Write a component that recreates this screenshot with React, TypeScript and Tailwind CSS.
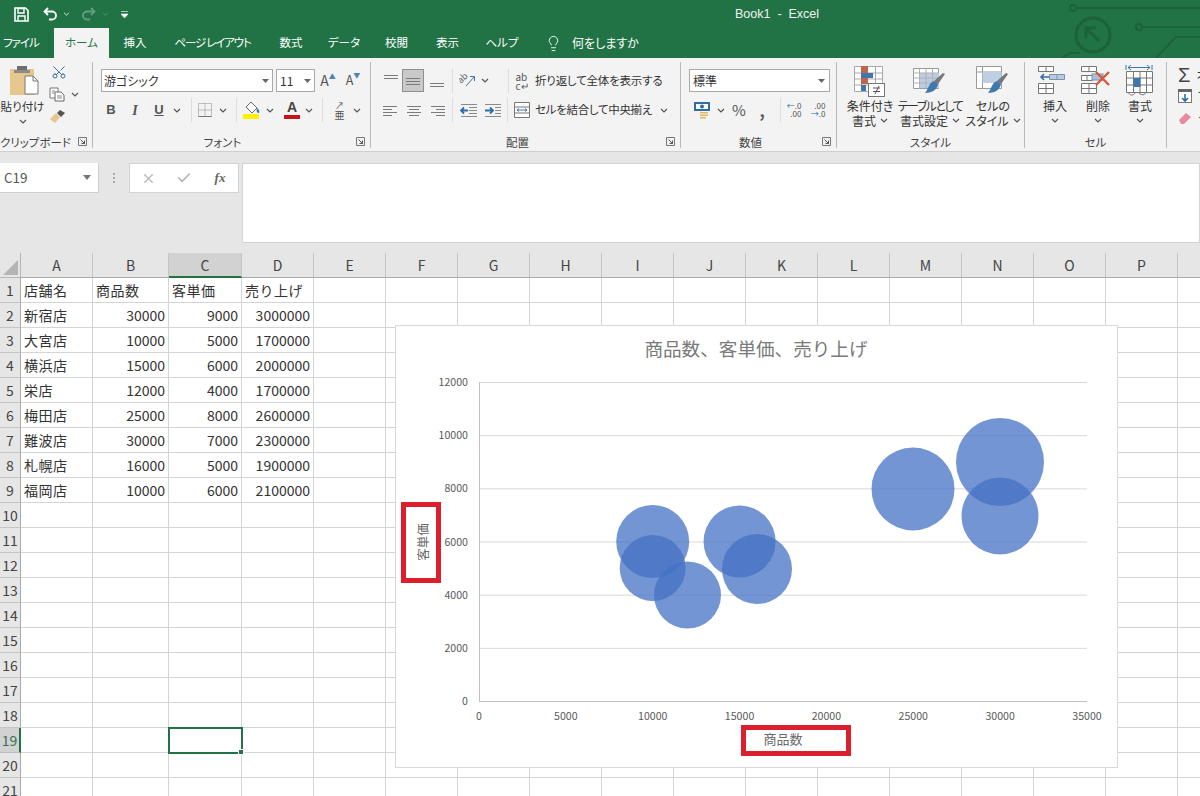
import { Scissors, Lightbulb, X, Check } from "lucide-react";
import type { ReactNode } from "react";

const COLS = ["A", "B", "C", "D", "E", "F", "G", "H", "I", "J", "K", "L", "M", "N", "O", "P", "Q", "R"];

const DATA: [string, number, number, number][] = [
  ["新宿店", 30000, 9000, 3000000],
  ["大宮店", 10000, 5000, 1700000],
  ["横浜店", 15000, 6000, 2000000],
  ["栄店", 12000, 4000, 1700000],
  ["梅田店", 25000, 8000, 2600000],
  ["難波店", 30000, 7000, 2300000],
  ["札幌店", 16000, 5000, 1900000],
  ["福岡店", 10000, 6000, 2100000],
];

const BUBBLES = [
  [1000, 462, 44],
  [652.7, 541.5, 36.5],
  [652.7, 568, 33],
  [739.6, 541.5, 36],
  [757, 569, 35],
  [687.5, 595, 33.5],
  [913, 489, 41.5],
  [1000, 516, 38.5],
];

function Chevron({ className = "" }: { className?: string }) {
  return (
    <svg width="8" height="5" viewBox="0 0 8 5" className={className}>
      <path d="M1 1l3 3 3-3" fill="none" stroke="#555" strokeWidth="1.2" />
    </svg>
  );
}

function Slot({ w, children, className = "" }: { w: number; children?: ReactNode; className?: string }) {
  return (
    <div className={`flex shrink-0 items-center justify-center ${className}`} style={{ width: w }}>
      {children}
    </div>
  );
}

function Sep({ className = "" }: { className?: string }) {
  return <div className={`h-[24px] w-px shrink-0 bg-[#dcdcdc] ${className}`} />;
}

function Launcher() {
  return (
    <svg width="9" height="9" viewBox="0 0 9 9" className="absolute right-[5px] bottom-[2px]">
      <path d="M.5 8.5v-8h8v8z" fill="none" stroke="#777" />
      <path d="M2.5 2.5l4 4M6.5 3.5v3h-3" fill="none" stroke="#555" />
    </svg>
  );
}

function Group({ w, label, pr = 0, launcher = true, children }: { w: number; label: string; pr?: number; launcher?: boolean; children: ReactNode }) {
  return (
    <div className="relative flex h-full shrink-0 flex-col border-r border-[#b9b9b9]" style={{ width: w }}>
      <div className="h-[73px] shrink-0">{children}</div>
      <div className="flex-1 text-center text-[11.5px] leading-[14px] whitespace-nowrap text-[#444]" style={{ paddingRight: pr }}>
        {label}
      </div>
      {launcher && <Launcher />}
    </div>
  );
}

// three short lines used by the alignment buttons
function Lines({ kind }: { kind: "l" | "c" | "r" | "t" | "m" | "b" }) {
  const ys = kind === "t" ? [2, 5] : kind === "m" ? [5, 8, 11] : kind === "b" ? [10, 13] : [3, 6, 9, 12];
  return (
    <svg width="16" height="15" viewBox="0 0 16 15">
      {ys.map((y, i) => {
        const short = i % 2 === 1;
        let x1 = 1;
        let x2 = 15;
        if (short && kind === "l") x2 = 10;
        if (short && kind === "r") x1 = 6;
        if (short && kind === "c") {
          x1 = 3;
          x2 = 13;
        }
        return <line key={y} x1={x1} x2={x2} y1={y + 0.5} y2={y + 0.5} stroke="#7b7b7b" />;
      })}
    </svg>
  );
}

function Indent({ flip }: { flip?: boolean }) {
  return (
    <svg width="18" height="14" viewBox="0 0 18 14">
      {[1, 4, 7, 10, 13].map((y) => (
        <line key={y} x1={y > 3 && y < 11 ? (flip ? 11 : 9) : 1} x2="17" y1={y + 0.5} y2={y + 0.5} stroke="#8a8a8a" />
      ))}
      <path d={flip ? "M1 7.5h8M6 4.5l3 3-3 3" : "M8 7.5H1M4 4.5l-3 3 3 3"} fill="none" stroke="#2f6ea5" strokeWidth="1.8" />
    </svg>
  );
}

function PasteIcon() {
  return (
    <svg width="30" height="30" viewBox="0 0 30 30">
      <rect x="0" y="4" width="24" height="26" fill="#e8c78f" />
      <rect x="7" y="1" width="10" height="6" fill="#6f6f6f" />
      <rect x="4" y="5" width="16" height="3" fill="#8b8b8b" />
      <path d="M15 11h8l5 5v13H15z" fill="#fff" stroke="#777" />
      <path d="M23 11v5h5" fill="none" stroke="#777" />
    </svg>
  );
}

function CopyIcon() {
  return (
    <svg width="16" height="15" viewBox="0 0 16 15">
      <path d="M1 1h8v10H1z" fill="#fff" stroke="#777" />
      <path d="M6 5h6l3 3v6H6z" fill="#fff" stroke="#666" />
      <path d="M8 9h5M8 11h5M3 4h3M3 6h2" stroke="#888" />
    </svg>
  );
}

function BrushIcon() {
  return (
    <svg width="17" height="15" viewBox="0 0 17 15">
      <path d="M1 10l6-6 4 4-5 6z" fill="#e7c58c" />
      <path d="M8 4l3-3 5 3-4 4z" fill="#555" />
    </svg>
  );
}

function CondIcon() {
  return (
    <svg width="32" height="32" viewBox="0 0 32 32">
      <path d="M.5 1.5h28v25H.5zM.5 8h28M.5 14h28M.5 20h28M7.5 1.5v25M21.5 1.5v25" fill="#fff" stroke="#a8a8a8" />
      <rect x="7" y="1" width="7" height="7" fill="#c0654a" />
      <rect x="7" y="8" width="12" height="5" fill="#3f76ad" />
      <rect x="7" y="13" width="7" height="6" fill="#c0654a" />
      <rect x="7" y="20" width="5" height="6" fill="#3f76ad" />
      <rect x="14.5" y="18.5" width="16" height="13" fill="#fff" stroke="#777" />
      <path d="M19 23h7M19 26.5h7M25 21l-4 8" stroke="#555" fill="none" />
    </svg>
  );
}

function SheetBrush({ table }: { table?: boolean }) {
  return (
    <svg width="34" height="32" viewBox="0 0 34 32">
      {table ? (
        <>
          <path d="M.5 3.5h25v20H.5z" fill="#fff" stroke="#9a9a9a" />
          <rect x="6" y="8" width="20" height="15" fill="#bccde2" />
          <path d="M6.5 3.5v20M13 3.5v20M19.5 3.5v20M.5 8h25M.5 13h25M.5 18h25" stroke="#b0b0b0" fill="none" />
        </>
      ) : (
        <>
          <path d="M.5 1.5h25v22H.5zM.5 7h25M6.5 1.5v22" fill="#fff" stroke="#9a9a9a" />
          <rect x="6.5" y="7" width="19" height="11" fill="#bccfe4" />
        </>
      )}
      <path d="M32 9l-7 10-4-3 9-8z" fill="#777" />
      <path d="M21 16l4 3c-1 5-5 9-13 9 2-2 2-4 4-7 1-3 3-4 5-5z" fill="#3f78ad" />
    </svg>
  );
}

function InsertIcon({ del }: { del?: boolean }) {
  return (
    <svg width="34" height="32" viewBox="0 0 34 32">
      <path d="M.5 1.5h15v5H.5zM8 1.5v5M.5 18.5h15v10H.5zM.5 23.5h15M8 18.5v10" fill="#fff" stroke="#777" />
      {del ? (
        <>
          <path d="M.5 10.5h11v5H.5zM6 10.5v5" fill="#fff" stroke="#777" />
          <rect x="11" y="9" width="11" height="6" fill="#a9c0d8" stroke="#7a93ad" />
          <path d="M15 7l13 13M28 7L15 20" stroke="#d4583b" strokeWidth="2.4" />
        </>
      ) : (
        <>
          <path d="M3 12h8M6 9l-3 3 3 3" fill="none" stroke="#2f6ea5" strokeWidth="1.6" />
          <path d="M11.5 9.5h15v5h-15zM19 9.5v5" fill="#b9cbdf" stroke="#7a93ad" />
        </>
      )}
    </svg>
  );
}

function FormatIcon() {
  return (
    <svg width="30" height="32" viewBox="0 0 30 32">
      <path d="M1 0v5M27 0v5M3 2.5h22M6 0L3 2.5 6 5M22 0l3 2.5L22 5" fill="none" stroke="#3f78ad" />
      <path d="M1.5 6.5h26v21h-26zM8.5 6.5v21M15 6.5v21M21.5 6.5v21M1.500 13h26M1.500 20h26" fill="#fff" stroke="#777" />
      <rect x="8.500" y="13" width="7" height="9" fill="#3f76ad" />
      <path d="M3 27c2 4 5 4 7 1M14 28c3 3 6 2 7-1" fill="none" stroke="#777" />
    </svg>
  );
}

function Large({ w, icon, l1, l2, ml = 0, tight = "" }: { w: number; icon: ReactNode; l1: string; l2: ReactNode; ml?: number; tight?: string }) {
  return (
    <div className="flex shrink-0 flex-col items-center" style={{ width: w, marginLeft: ml }}>
      <div className="flex h-[36px] items-start pt-[3px]">{icon}</div>
      <div className={`whitespace-nowrap text-[12px] leading-[15px] text-[#333] ${tight}`}>{l1}</div>
      <div className="flex h-[15px] items-center gap-[4px] whitespace-nowrap text-[12px] leading-[15px] text-[#333]">{l2}</div>
    </div>
  );
}

function Chart() {
  const yTicks = [0, 2000, 4000, 6000, 8000, 10000, 12000];
  const xTicks = [0, 5000, 10000, 15000, 20000, 25000, 30000, 35000];
  const yPos = (v: number) => 701 - (v / 12000) * 319;
  const xPos = (v: number) => 479 + (v / 35000) * 608;
  return (
    <div className="absolute top-[72px] left-[395px] h-[443px] w-[723px] border border-[#d9d9d9] bg-white">
      <svg width="721" height="441" viewBox="396 326 721 441" className="block">
        <text x="756" y="356" textAnchor="middle" fontSize="18.6" fill="#7a7a7a">商品数、客単価、売り上げ</text>
        {yTicks.map((v) => (
          <g key={v}>
            <line x1="479" x2="1087" y1={yPos(v) + 0.5} y2={yPos(v) + 0.5} stroke={v === 0 ? "#bfbfbf" : "#d9d9d9"} />
            <text x="468" y={yPos(v) + 4} textAnchor="end" fontSize="10.6" fill="#595959">{v}</text>
          </g>
        ))}
        <line x1="479.500" x2="479.500" y1="382" y2="701" stroke="#bfbfbf" />
        {xTicks.map((v) => (
          <text key={v} x={xPos(v)} y="720" textAnchor="middle" fontSize="10.6" fill="#595959">{v}</text>
        ))}
        {BUBBLES.map(([cx, cy, r]) => (
          <circle key={`${cx}-${cy}`} cx={cx} cy={cy} r={r} fill="#4472c4" fillOpacity="0.75" />
        ))}
        <text x="783" y="744" textAnchor="middle" fontSize="13" fill="#6a6a6a">商品数</text>
        <text transform="translate(428 542) rotate(-90)" textAnchor="middle" fontSize="12.500" fill="#6a6a6a">客単価</text>
        <rect x="403.500" y="504.500" width="35" height="76" fill="none" stroke="#dc1f2c" strokeWidth="5" />
        <rect x="743.500" y="727.500" width="105" height="26" fill="none" stroke="#dc1f2c" strokeWidth="5" />
      </svg>
    </div>
  );
}

function Sheet() {
  const rows = Array.from({ length: 21 }, (_, i) => i + 1);
  const cell = "h-[25px] border-r border-b border-[#d4d4d4] px-[3px] text-[14px] leading-[24px] text-[#333] whitespace-nowrap overflow-hidden";
  return (
    <div className="relative grid grid-cols-[21px_72px_76px_73px_72px_repeat(14,72px)]">
      <div className="flex h-[25px] items-end justify-end border-r border-b border-[#b5b5b5] bg-[#e6e6e6] p-[2px]">
        <div className="h-0 w-0 border-t-[15px] border-t-transparent [border-left-width:0] [border-right:15px_solid_#b4b4b4]" />
      </div>
      {COLS.map((c) => (
        <div
          key={c}
          className={`h-[25px] border-r border-[#c4c4c4] text-center text-[14px] leading-[24px] ${
            c === "C" ? "border-b-2 border-b-[#217346] bg-[#d2d2d2] text-[#444]" : "border-b border-b-[#a9a9a9] bg-[#e6e6e6] text-[#444]"
          }`}
        >
          {c}
        </div>
      ))}
      {rows.map((r) => (
        <div key={r} className="contents">
          <div
            className={`h-[25px] border-b text-center text-[14px] leading-[24px] ${
              r === 19
                ? "border-r-2 border-r-[#217346] border-b-[#bdbdbd] bg-[#d2d2d2] text-[#3c6e55]"
                : "border-r border-r-[#a9a9a9] border-b-[#c4c4c4] bg-[#e6e6e6] text-[#444]"
            }`}
          >
            {r}
          </div>
          {COLS.map((c, ci) => {
            let content: ReactNode = null;
            let right = false;
            if (r === 1 && ci < 4) {
              content = ["店舗名", "商品数", "客単価", "売り上げ"][ci];
            } else if (r >= 2 && r <= 9 && ci < 4) {
              content = DATA[r - 2][ci];
              right = ci > 0;
            }
            const selected = r === 19 && c === "C";
            return (
              <div
                key={c}
                className={`${cell} ${right ? "text-right" : "tracking-[0.5px]"} ${
                  selected ? "relative z-10 overflow-visible outline-2 -outline-offset-1 outline-[#217346]" : ""
                }`}
              >
                {content}
                {selected && <div className="absolute -right-[3px] -bottom-[3px] h-[6px] w-[6px] border border-white bg-[#217346]" />}
              </div>
            );
          })}
        </div>
      ))}
      <Chart />
    </div>
  );
}

export default function App() {
  const tabs: [string, number, string][] = [
    ["挿入", 52, ""],
    ["ページ レイアウト", 103, "tracking-[-1.2px]"],
    ["数式", 54, ""],
    ["データ", 52, ""],
    ["校閲", 53, ""],
    ["表示", 49, ""],
    ["ヘルプ", 60, ""],
  ];
  return (
    <div className="flex h-[796px] w-[1200px] flex-col overflow-hidden bg-white font-['Noto_Sans_CJK_JP','Noto_Sans',sans-serif]">
      <div className="relative h-[58px] shrink-0 overflow-hidden bg-[#217346] text-white [font-feature-settings:'palt']">
        {/* circuit pattern on the right of the title bar */}
        <svg width="150" height="58" viewBox="1050 0 150 58" className="absolute top-0 right-0">
          <g fill="none" stroke="#1b6239" strokeWidth="2">
            <circle cx="1073" cy="8" r="3" />
            <path d="M1076 8h124" />
            <circle cx="1093" cy="35" r="17" strokeWidth="3" />
            <path d="M1087 29l12 12M1086 38v-10h10" strokeWidth="3" />
            <circle cx="1139" cy="27" r="3" />
            <path d="M1142 27h58M1200 37h-24l-20 21M1062 58l8-5h10" />
          </g>
        </svg>

        <div className="relative flex h-[28px] items-center">
          <Slot w={42}>
            <svg width="15" height="15" viewBox="0 0 15 15">
              <path d="M1 1h10.500L14 3.500V14H1z" fill="none" stroke="#fff" strokeWidth="1.600" />
              <path d="M4 1.500h6V6H4zM4 14V9h7v5" fill="none" stroke="#fff" strokeWidth="1.400" />
            </svg>
          </Slot>
          <Slot w={16}>
            <svg width="15" height="14" viewBox="0 0 15 14">
              <path d="M5 1L1.500 4.500 5 8M2 4.500h7a4 4 0 0 1 0 8H6" fill="none" stroke="#fff" strokeWidth="1.800" />
            </svg>
          </Slot>
          <Slot w={16}>
            <svg width="7" height="4" viewBox="0 0 8 5"><path d="M1 1l3 3 3-3" fill="none" stroke="#fff" /></svg>
          </Slot>
          <Slot w={22} className="ml-[3px] opacity-30">
            <svg width="15" height="14" viewBox="0 0 15 14">
              <path d="M10 1l3.500 3.500L10 8M13 4.500H6a4 4 0 0 0 0 8h3" fill="none" stroke="#fff" strokeWidth="1.800" />
            </svg>
          </Slot>
          <Slot w={12} className="opacity-30">
            <svg width="7" height="4" viewBox="0 0 8 5"><path d="M1 1l3 3 3-3" fill="none" stroke="#fff" /></svg>
          </Slot>
          <Slot w={17} className="ml-[5px]">
            <svg width="7" height="7" viewBox="0 0 7 7"><path d="M0 .5h7M0 3h7L3.500 7z" fill="#fff" stroke="#fff" strokeWidth=".6" /></svg>
          </Slot>
          <span className="ml-[602px] whitespace-pre font-['Liberation_Sans',sans-serif] text-[12.500px] text-[#f2f2f2]">Book1  -  Excel</span>
        </div>

        <div className="relative flex h-[30px] items-stretch text-[11.500px] leading-[29px]">
          <div className="w-[54px] pl-[3px] tracking-[-1px]">ファイル</div>
          <div className="w-[55px] bg-[#f3f3f3] text-center text-[#217346]">ホーム</div>
          {tabs.map(([t, w, extra]) => (
            <div key={t} className={`text-center whitespace-pre ${extra}`} style={{ width: w }}>
              {t}
            </div>
          ))}
          <Slot w={40}>
            <Lightbulb size={17} strokeWidth={1.300} className="ml-[2px]" />
          </Slot>
          <div className="text-[12px]">何をしますか</div>
        </div>
      </div>

      <div className="flex h-[94px] shrink-0 overflow-hidden border-b border-[#cfcfcf] bg-[#f3f3f3] pt-[4px] pb-[3px] text-[#333] [font-feature-settings:'palt']">
        <Group w={93} label="クリップボード" pr={26}>
          <div className="flex h-full">
            <div className="flex w-[45px] flex-col items-center">
              <div className="ml-[4px] h-[36px] pt-[3px]"><PasteIcon /></div>
              <div className="text-[11.500px] leading-[16px] whitespace-nowrap">貼り付け</div>
              <Chevron className="mt-[5px]" />
            </div>
            <div className="flex flex-col pt-[2px] pl-[4px]">
              <Scissors size={16} strokeWidth={1.500} className="ml-[2px] rotate-[-90deg] text-[#43719f]" />
              <div className="mt-[7px] flex items-center gap-[6px]">
                <CopyIcon />
                <Chevron />
              </div>
              <div className="mt-[7px]"><BrushIcon /></div>
            </div>
          </div>
        </Group>

        <Group w={278} label="フォント" pr={18}>
          <div className="mt-[7px] flex h-[23px] items-center pl-[8px]">
            <div className="flex h-[23px] w-[172px] items-center justify-between border border-[#a9a9a9] bg-white pr-[3px] pl-[2px] text-[12px]">
              游ゴシック
              <svg width="7" height="4" viewBox="0 0 7 4"><path d="M0 0h7L3.500 4z" fill="#666" /></svg>
            </div>
            <div className="ml-[3px] flex h-[23px] w-[39px] items-center justify-between border border-[#a9a9a9] bg-white pr-[3px] pl-[3px] text-[12px]">
              11
              <svg width="7" height="4" viewBox="0 0 7 4"><path d="M0 0h7L3.500 4z" fill="#666" /></svg>
            </div>
            <Slot w={26} className="text-[14px] text-[#555]">A<span className="-mt-[8px] text-[7px] text-[#4f81bd]">▲</span></Slot>
            <Slot w={24} className="text-[12.500px] text-[#555]">A<span className="-mt-[10px] text-[7px] text-[#4f81bd]">▼</span></Slot>
          </div>
          <div className="mt-[7px] flex h-[22px] items-center pl-[6px] text-[#555]">
            <Slot w={24} className="font-['Liberation_Sans',sans-serif] text-[13px] font-bold">B</Slot>
            <Slot w={24} className="font-['Liberation_Serif',serif] text-[14px] font-bold italic">I</Slot>
            <Slot w={24} className="font-['Liberation_Sans',sans-serif] text-[13px] font-bold underline">U</Slot>
            <Slot w={12}><Chevron /></Slot>
            <Sep className="ml-[8px]" />
            <Slot w={26}>
              <svg width="14" height="14" viewBox="0 0 14 14">
                <path d="M.5.5h13v13H.5zM7 .5v13M.5 7h13" fill="none" stroke="#888" strokeDasharray="1 1" />
                <path d="M.5 13.500h13" stroke="#777" />
              </svg>
            </Slot>
            <Slot w={10}><Chevron /></Slot>
            <Sep className="ml-[8px]" />
            <Slot w={28} className="ml-[1px]">
              <svg width="18" height="18" viewBox="0 0 18 18">
                <path d="M3 6l5-5 6 6-5 5z" fill="#fff" stroke="#666" />
                <path d="M14 7c2 2 3 3 2 5-2 0-3-2-2-5z" fill="#3f78ad" />
                <rect x="0" y="13" width="16" height="5" fill="#fff200" />
              </svg>
            </Slot>
            <Slot w={8}><Chevron /></Slot>
            <Slot w={26} className="ml-[5px]">
              <div className="flex flex-col items-center">
                <span className="font-['Liberation_Sans',sans-serif] text-[14px] leading-[13px] font-bold text-[#444]">A</span>
                <div className="mt-[1px] h-[4px] w-[16px] bg-[#c5151c]" />
              </div>
            </Slot>
            <Slot w={8}><Chevron /></Slot>
            <Sep className="ml-[9px]" />
            <Slot w={27} className="ml-[3px]">
              <span className="flex flex-col items-center text-[10px] leading-[9px] text-[#555]"><span className="text-[9px]">↗</span>亜</span>
            </Slot>
            <Slot w={8}><Chevron /></Slot>
          </div>
        </Group>

        <Group w={310} label="配置" pr={16}>
          <div className="mt-[7px] flex h-[23px] items-center pl-[9px]">
            <Slot w={22}><Lines kind="t" /></Slot>
            <Slot w={22} className="h-[23px] border border-[#8f8f8f] bg-[#c9c9c9]"><Lines kind="m" /></Slot>
            <Slot w={26}><Lines kind="b" /></Slot>
            <Sep className="ml-[2px]" />
            <Slot w={28}>
              <svg width="17" height="15" viewBox="0 0 17 15">
                <text transform="translate(2 11) rotate(-45)" fontSize="9" fill="#666">ab</text>
                <path d="M7 13L15 4M11 3.500h4.500V8" fill="none" stroke="#3f78ad" />
              </svg>
            </Slot>
            <Slot w={8}><Chevron /></Slot>
            <Sep className="ml-[19px]" />
            <Slot w={26}>
              <span className="flex flex-col text-[10px] leading-[9px] text-[#555]"><span>ab</span><span>c↵</span></span>
            </Slot>
            <span className="text-[11.500px] tracking-[-0.2px] whitespace-nowrap">折り返して全体を表示する</span>
          </div>
          <div className="mt-[7px] flex h-[22px] items-center pl-[7px]">
            <Slot w={24}><Lines kind="l" /></Slot>
            <Slot w={24}><Lines kind="c" /></Slot>
            <Slot w={24}><Lines kind="r" /></Slot>
            <Sep className="ml-[2px]" />
            <Slot w={24} className="ml-[4px]"><Indent /></Slot>
            <Slot w={24}><Indent flip /></Slot>
            <Sep className="ml-[2px]" />
            <Slot w={27}>
              <svg width="16" height="16" viewBox="0 0 16 16">
                <path d="M.5.5h15v15H.5zM.5 5h15M.5 11h15" fill="#fff" stroke="#777" />
                <path d="M3 8h10M5 6.500L3 8l2 1.500M11 6.500L13 8l-2 1.500" fill="none" stroke="#3f78ad" />
              </svg>
            </Slot>
            <span className="text-[11.500px] tracking-[-0.3px] whitespace-nowrap">セルを結合して中央揃え</span>
            <Chevron className="ml-[8px]" />
          </div>
        </Group>

        <Group w={156} label="数値" pr={16}>
          <div className="mt-[7px] ml-[8px] flex h-[23px] w-[141px] items-center justify-between border border-[#a9a9a9] bg-white pr-[4px] pl-[3px] text-[12px]">
            標準
            <svg width="7" height="4" viewBox="0 0 7 4"><path d="M0 0h7L3.500 4z" fill="#666" /></svg>
          </div>
          <div className="mt-[7px] flex h-[22px] items-center pl-[10px]">
            <Slot w={24}>
              <svg width="18" height="18" viewBox="0 0 18 18">
                <rect x="0" y="1" width="16" height="9" fill="#2f6ea5" />
                <rect x="2" y="3" width="12" height="5" fill="#fff" />
                <circle cx="8" cy="5.500" r="2" fill="#2f6ea5" />
                <path d="M6 11h8v1.500H6zM6 13.500h8V15H6zM6 16h6v1.500H6z" fill="#e2b765" />
              </svg>
            </Slot>
            <Slot w={12}><Chevron /></Slot>
            <Slot w={24} className="text-[15px] text-[#555]">%</Slot>
            <Slot w={22} className="text-[16px] font-bold text-[#555]">,</Slot>
            <Sep className="ml-[7px]" />
            <Slot w={24} className="ml-[1px] text-[8px] leading-[8px] text-[#555]">
              <span className="flex flex-col items-end"><span><span className="text-[#2f6ea5]">←</span>.0</span><span>.00</span></span>
            </Slot>
            <Slot w={24} className="text-[8px] leading-[8px] text-[#555]">
              <span className="flex flex-col items-end"><span>.00</span><span><span className="text-[#2f6ea5]">→</span>.0</span></span>
            </Slot>
          </div>
        </Group>

        <Group w={188} label="スタイル" launcher={false}>
          <div className="flex">
            <Large w={46} ml={10} icon={<CondIcon />} l1="条件付き" l2={<>書式<Chevron /></>} />
            <Large w={64} ml={5} icon={<SheetBrush table />} l1="テーブルとして" tight="tracking-[-1.500px]" l2={<>書式設定<Chevron /></>} />
            <Large w={52} ml={5} icon={<SheetBrush />} l1="セルの" l2={<>スタイル<Chevron /></>} />
          </div>
        </Group>

        <Group w={142} label="セル" launcher={false}>
          <div className="flex">
            <Large w={42} ml={9} icon={<InsertIcon />} l1="挿入" l2={<Chevron />} />
            <Large w={42} ml={1} icon={<InsertIcon del />} l1="削除" l2={<Chevron />} />
            <Large w={42} icon={<FormatIcon />} l1="書式" l2={<Chevron />} />
          </div>
        </Group>

        <div className="flex flex-col pt-[3px] pl-[11px] text-[12px] whitespace-nowrap">
          <div className="flex h-[20px] items-center gap-[6px]"><span className="font-['Liberation_Sans',sans-serif] text-[20px] leading-[20px] text-[#444]">Σ</span>オート SUM</div>
          <div className="flex h-[22px] items-center gap-[6px]">
            <svg width="14" height="14" viewBox="0 0 14 14">
              <rect x=".5" y=".5" width="13" height="13" fill="#fff" stroke="#777" />
              <rect x="0" y="0" width="14" height="3" fill="#666" />
              <path d="M7 5v7M4 9l3 3 3-3" fill="none" stroke="#2f6ea5" strokeWidth="1.600" />
            </svg>
            フィル
          </div>
          <div className="flex h-[22px] items-center gap-[6px]">
            <svg width="14" height="12" viewBox="0 0 14 12"><path d="M1 8l7-7 5 4-7 7H3z" fill="#e98aa0" /></svg>
            クリア
          </div>
        </div>
      </div>

      <div className="flex h-[101px] shrink-0 items-start bg-[#e6e6e6] pt-[11px]">
        <div className="flex h-[30px] w-[99px] items-center justify-between border-r border-b border-[#cfcfcf] bg-white pr-[7px] pl-[4px] text-[13.500px] text-[#555]">
          C19
          <svg width="8" height="5" viewBox="0 0 8 5"><path d="M0 0h8L4 5z" fill="#777" /></svg>
        </div>
        <div className="flex h-[30px] w-[30px] flex-col items-center justify-center gap-[2px]">
          <div className="h-[2px] w-[2px] bg-[#aaa]" />
          <div className="h-[2px] w-[2px] bg-[#aaa]" />
          <div className="h-[2px] w-[2px] bg-[#aaa]" />
        </div>
        <div className="flex h-[30px] w-[110px] items-center border border-[#d4d4d4] bg-white">
          <Slot w={36}><X size={15} strokeWidth={2} className="text-[#b5b5b5]" /></Slot>
          <Slot w={36}><Check size={16} strokeWidth={2.500} className="text-[#b5b5b5]" /></Slot>
          <Slot w={36} className="font-['Liberation_Serif',serif] text-[13px] font-bold text-[#666] italic">fx</Slot>
        </div>
        <div className="ml-[3px] h-[80px] flex-1 border border-[#d4d4d4] bg-white" />
      </div>

      <Sheet />
    </div>
  );
}
